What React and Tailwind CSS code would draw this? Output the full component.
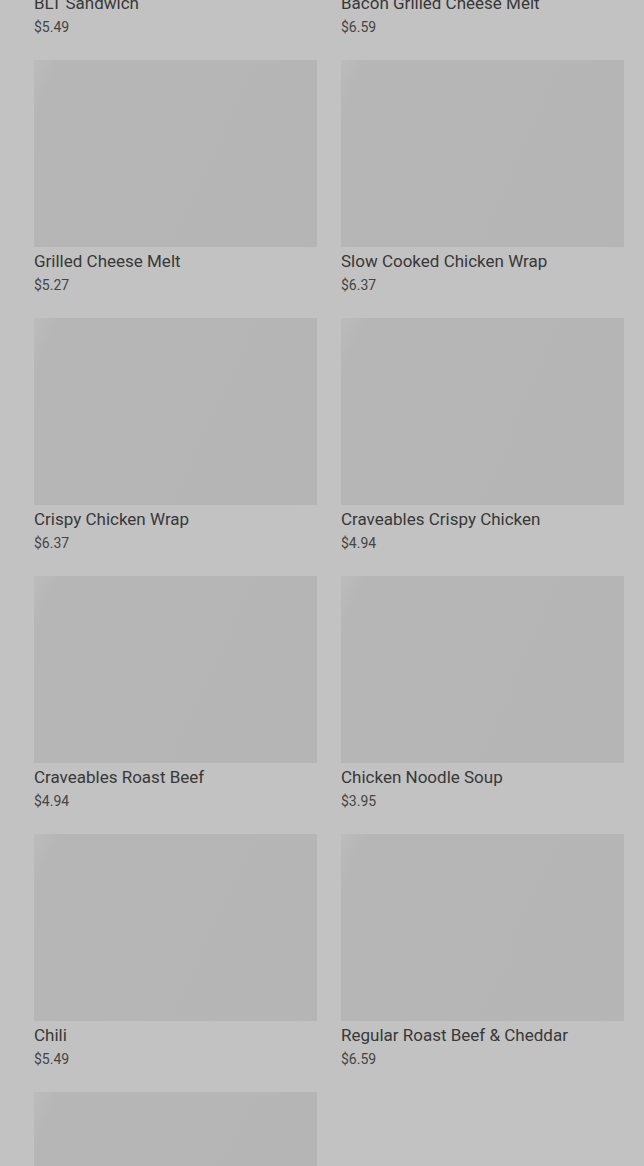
import React from 'react';

const items = [
  { name: 'BLT Sandwich', price: '$5.49' },
  { name: 'Bacon Grilled Cheese Melt', price: '$6.59' },
  { name: 'Grilled Cheese Melt', price: '$5.27' },
  { name: 'Slow Cooked Chicken Wrap', price: '$6.37' },
  { name: 'Crispy Chicken Wrap', price: '$6.37' },
  { name: 'Craveables Crispy Chicken', price: '$4.94' },
  { name: 'Craveables Roast Beef', price: '$4.94' },
  { name: 'Chicken Noodle Soup', price: '$3.95' },
  { name: 'Chili', price: '$5.49' },
  { name: 'Regular Roast Beef & Cheddar', price: '$6.59' },
  { name: '', price: '' },
];

function MenuCard({ item }) {
  return (
    <div className="flex flex-col">
      <div className="h-[187px] w-full bg-[linear-gradient(115deg,#bcbcbc_0%,#b6b6b6_7%,#b5b5b5_100%)]" />
      {item.name && (
        <>
          <h3 className="mt-[2px] text-[17px] leading-6 font-normal text-[#383838]">{item.name}</h3>
          <p className="mt-[2px] text-sm leading-5 text-[#454545]">{item.price}</p>
        </>
      )}
    </div>
  );
}

export default function App() {
  return (
    <div className="h-[1166px] bg-[#c2c2c2] overflow-hidden font-['Roboto',sans-serif]">
      <div className="pl-[34px] pr-[20px] -mt-[198px] grid grid-cols-2 gap-x-6 gap-y-[23px]">
        {items.map((item, i) => (
          <MenuCard key={i} item={item} />
        ))}
      </div>
    </div>
  );
}
